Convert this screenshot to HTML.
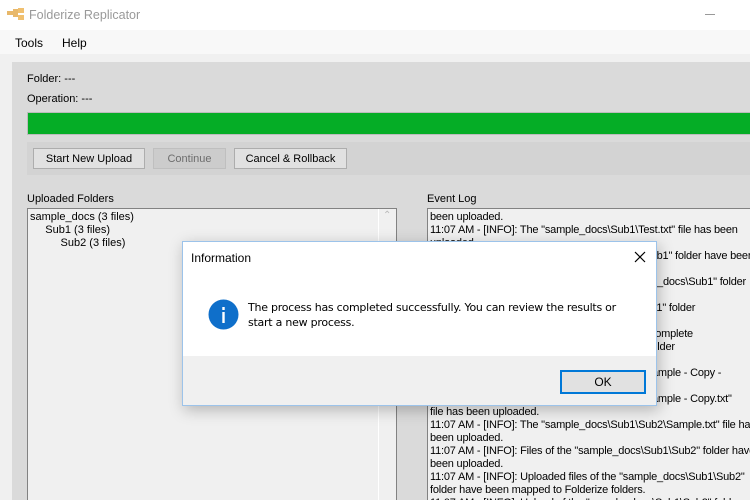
<!DOCTYPE html>
<html style="width:750px;height:500px;overflow:hidden"><head><style>
*{margin:0;padding:0;box-sizing:border-box}
body{width:750px;height:500px;overflow:hidden;position:relative;background:#f0f0f0;font-family:"Liberation Sans",sans-serif;font-size:11px;color:#000}
.abs{position:absolute}
.btn{position:absolute;top:148px;height:21px;border:1px solid #adadad;background:#e1e1e1;text-align:center;line-height:20px;font-size:11px}
.log div{white-space:nowrap;height:13px;line-height:13px;letter-spacing:-0.2px}
</style></head><body>
<div class="abs" style="left:0;top:0;width:750px;height:30px;background:#fff"></div>
<svg class="abs" style="left:7px;top:7px" width="18" height="16"><rect x="0" y="4" width="6" height="4" fill="#e8b86a"/><rect x="6" y="2" width="5" height="8" fill="#e8b86a"/><rect x="11" y="1" width="6" height="5" fill="#f0c070"/><rect x="11" y="8" width="6" height="5" fill="#f0c070"/></svg>
<div class="abs" style="left:29px;top:8px;font-size:12.5px;color:#999">Folderize Replicator</div>
<div class="abs" style="left:705px;top:14px;width:10px;height:1px;background:#999"></div>
<div class="abs" style="left:0;top:30px;width:750px;height:24px;background:#f8f8f8"></div>
<div class="abs" style="left:15px;top:36px;font-size:12px">Tools</div>
<div class="abs" style="left:62px;top:36px;font-size:12px">Help</div>
<div class="abs" style="left:12px;top:62px;width:738px;height:438px;background:#dadada"></div>
<div class="abs" style="left:27px;top:73px">Folder: ---</div>
<div class="abs" style="left:27px;top:93px">Operation: ---</div>
<div class="abs" style="left:27px;top:112px;width:723px;height:23px;background:#05ad26;border:1px solid #bcbcbc;border-right:none"></div>
<div class="abs" style="left:27px;top:142px;width:723px;height:33px;background:#d3d3d3"></div>
<div class="btn" style="left:33px;width:112px">Start New Upload</div>
<div class="btn" style="left:153px;width:73px;background:#cccccc;border-color:#bfbfbf;color:#6d6d6d">Continue</div>
<div class="btn" style="left:234px;width:113px">Cancel &amp; Rollback</div>
<div class="abs" style="left:27px;top:193px">Uploaded Folders</div>
<div class="abs" style="left:27px;top:208px;width:370px;height:292px;background:#f0f0f0;border:1px solid #828282;border-bottom:none"></div>
<div class="abs" style="left:378px;top:209px;width:18px;height:291px;background:#f0f0f0;border-left:1px solid #fff"></div>
<div class="abs" style="left:383px;top:210px;color:#bbb;font-size:10px">&#8963;</div>
<div class="abs" style="left:30px;top:211px;line-height:13px">sample_docs (3 files)<br>&nbsp;&nbsp;&nbsp;&nbsp;&nbsp;Sub1 (3 files)<br>&nbsp;&nbsp;&nbsp;&nbsp;&nbsp;&nbsp;&nbsp;&nbsp;&nbsp;&nbsp;Sub2 (3 files)</div>
<div class="abs" style="left:427px;top:193px">Event Log</div>
<div class="abs" style="left:427px;top:208px;width:323px;height:292px;background:#f0f0f0;border:1px solid #828282;border-right:none;border-bottom:none;overflow:hidden">
<div class="log" style="position:absolute;left:2px;top:2px">
<div>been uploaded.</div>
<div>11:07 AM - [INFO]: The "sample_docs\Sub1\Test.txt" file has been</div>
<div>uploaded.</div>
<div>11:07 AM - [INFO]: Files of the "sample_docs\Sub1" folder have been</div>
<div>uploaded.</div>
<div>11:07 AM - [INFO]: Uploaded files of the "sample_docs\Sub1" folder</div>
<div>have been mapped.</div>
<div>11:07 AM - [INFO]: Upload of "sample_docs\Sub1" folder</div>
<div>is completed.</div>
<div>11:07 AM - [INFO]: "sample_docs\Sub1" folder complete</div>
<div>11:07 AM - [INFO]: "sample_docs\Sub1\Sub2" folder</div>
<div>has been created.</div>
<div>11:07 AM - [INFO]: "sample_docs\Sub1\Sub2\Sample - Copy -</div>
<div>Copy.txt" file has been uploaded.</div>
<div>11:07 AM - [INFO]: "sample_docs\Sub1\Sub2\Sample - Copy.txt"</div>
<div>file has been uploaded.</div>
<div>11:07 AM - [INFO]: The "sample_docs\Sub1\Sub2\Sample.txt" file has</div>
<div>been uploaded.</div>
<div>11:07 AM - [INFO]: Files of the "sample_docs\Sub1\Sub2" folder have</div>
<div>been uploaded.</div>
<div>11:07 AM - [INFO]: Uploaded files of the "sample_docs\Sub1\Sub2"</div>
<div>folder have been mapped to Folderize folders.</div>
<div>11:07 AM - [INFO]: Upload of the "sample_docs\Sub1\Sub2" folder</div>
</div></div>
<div class="abs" style="left:182px;top:241px;width:475px;height:165px;background:#f0f0f0;border:1px solid #9cc3ea;box-shadow:2px 4px 14px rgba(0,0,0,0.25)"></div>
<div class="abs" style="left:183px;top:242px;width:473px;height:114px;background:#fff"></div>
<div class="abs" style="left:191px;top:251px;font-size:12px">Information</div>
<svg class="abs" style="left:634px;top:251px" width="12" height="12"><path d="M1 1L11 11M11 1L1 11" stroke="#000" stroke-width="1.2"/></svg>
<svg class="abs" style="left:208px;top:299px" width="31" height="31"><circle cx="15.5" cy="15.5" r="15" fill="#0f6fca"/><rect x="14.3" y="8" width="2.4" height="3" fill="#fff"/><rect x="14.3" y="13" width="2.4" height="11" fill="#fff"/></svg>
<div class="abs" style="left:248px;top:300px;line-height:15px;font-family:'DejaVu Sans',sans-serif;letter-spacing:-0.25px;font-size:11px">The process has completed successfully. You can review the results or<br>start a new process.</div>
<div class="abs" style="left:560px;top:370px;width:86px;height:24px;border:2px solid #0078d7;background:#e1e1e1;text-align:center;line-height:20px;font-size:12px">OK</div>
</body></html>
